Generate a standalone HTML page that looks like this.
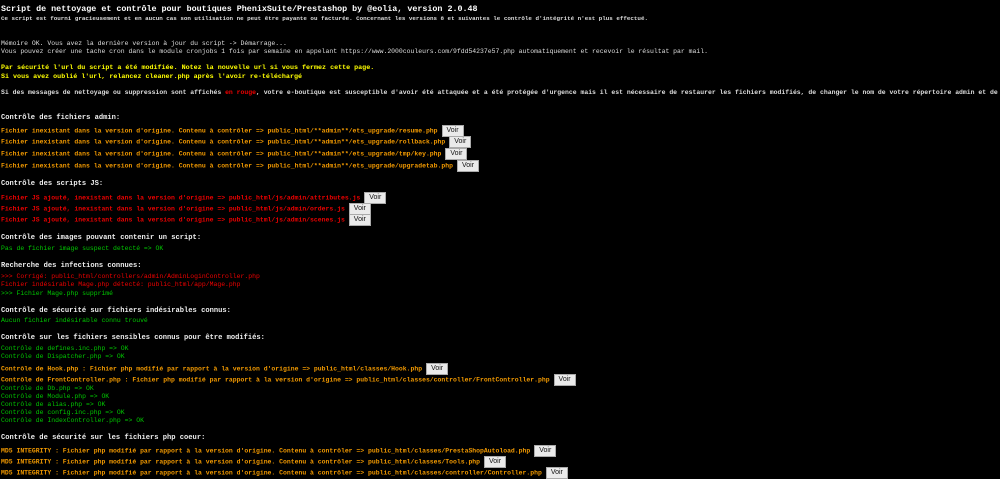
<!DOCTYPE html>
<html><head><meta charset="utf-8"><style>
body{margin:0;background:#000;width:1000px;height:477px;overflow:hidden;position:relative;font-family:"Liberation Mono",monospace;}
.l{position:absolute;left:1px;white-space:pre;line-height:10px;font-size:6.45px;font-weight:bold;}
.t{font-size:8.37px;color:#fff;}
.s{font-size:5.87px;color:#ddd;}
.w{color:#ddd;font-weight:normal}
.h{font-size:7.1px;color:#eee}
.y{color:#ff0;font-size:6.7px}
.o{color:#f39a00}
.r{color:#e00}
.g{color:#00c800;font-weight:normal}
.b{display:inline-block;width:20px;height:10px;line-height:10px;margin-left:4px;background:#eaeaea;border:1px solid #aaa;color:#111;font-family:"Liberation Sans",sans-serif;font-size:7px;font-weight:normal;text-align:center;vertical-align:middle;}
</style></head><body>
<div class="l t" style="top:4px">Script de nettoyage et contrôle pour boutiques PhenixSuite/Prestashop by @eolia, version 2.0.48</div>
<div class="l s" style="top:14px">Ce script est fourni gracieusement et en aucun cas son utilisation ne peut être payante ou facturée. Concernant les versions 8 et suivantes le contrôle d'intégrité n'est plus effectué.</div>
<div class="l w" style="top:39px;font-size:6.45px">Mémoire OK. Vous avez la dernière version à jour du script -> Démarrage...</div>
<div class="l w" style="top:47px;font-size:6.45px">Vous pouvez créer une tache cron dans le module cronjobs 1 fois par semaine en appelant https://www.2000couleurs.com/9fdd54237e57.php automatiquement et recevoir le résultat par mail.</div>
<div class="l y" style="top:63px">Par sécurité l'url du script a été modifiée. Notez la nouvelle url si vous fermez cette page.</div>
<div class="l y" style="top:72px">Si vous avez oublié l'url, relancez cleaner.php après l'avoir re-téléchargé</div>
<div class="l s" style="top:88px;font-size:6.45px">Si des messages de nettoyage ou suppression sont affichés <span class="r">en rouge</span>, votre e-boutique est susceptible d'avoir été attaquée et a été protégée d'urgence mais il est nécessaire de restaurer les fichiers modifiés, de changer le nom de votre répertoire admin et de</div>
<div class="l h" style="top:113px">Contrôle des fichiers admin:</div>
<div class="l o" style="top:125px">Fichier inexistant dans la version d'origine. Contenu à contrôler => public_html/**admin**/ets_upgrade/resume.php<span class="b">Voir</span></div>
<div class="l o" style="top:136px">Fichier inexistant dans la version d'origine. Contenu à contrôler => public_html/**admin**/ets_upgrade/rollback.php<span class="b">Voir</span></div>
<div class="l o" style="top:148px">Fichier inexistant dans la version d'origine. Contenu à contrôler => public_html/**admin**/ets_upgrade/tmp/key.php<span class="b">Voir</span></div>
<div class="l o" style="top:160px">Fichier inexistant dans la version d'origine. Contenu à contrôler => public_html/**admin**/ets_upgrade/upgradetab.php<span class="b">Voir</span></div>
<div class="l h" style="top:179px">Contrôle des scripts JS:</div>
<div class="l r" style="top:192px">Fichier JS ajouté, inexistant dans la version d'origine => public_html/js/admin/attributes.js<span class="b">Voir</span></div>
<div class="l r" style="top:203px">Fichier JS ajouté, inexistant dans la version d'origine => public_html/js/admin/orders.js<span class="b">Voir</span></div>
<div class="l r" style="top:214px">Fichier JS ajouté, inexistant dans la version d'origine => public_html/js/admin/scenes.js<span class="b">Voir</span></div>
<div class="l h" style="top:233px">Contrôle des images pouvant contenir un script:</div>
<div class="l g" style="top:244px">Pas de fichier image suspect detecté => OK</div>
<div class="l h" style="top:261px">Recherche des infections connues:</div>
<div class="l r" style="top:272px;font-weight:normal">>>> Corrigé: public_html/controllers/admin/AdminLoginController.php</div>
<div class="l r" style="top:280px;font-weight:normal">Fichier indésirable Mage.php détecté: public_html/app/Mage.php</div>
<div class="l g" style="top:289px">>>> Fichier Mage.php supprimé</div>
<div class="l h" style="top:306px">Contrôle de sécurité sur fichiers indésirables connus:</div>
<div class="l g" style="top:316px">Aucun fichier indésirable connu trouvé</div>
<div class="l h" style="top:333px">Contrôle sur les fichiers sensibles connus pour être modifiés:</div>
<div class="l g" style="top:344px">Contrôle de defines.inc.php => OK</div>
<div class="l g" style="top:352px">Contrôle de Dispatcher.php => OK</div>
<div class="l o" style="top:363px">Contrôle de Hook.php : Fichier php modifié par rapport à la version d'origine => public_html/classes/Hook.php<span class="b">Voir</span></div>
<div class="l o" style="top:374px">Contrôle de FrontController.php : Fichier php modifié par rapport à la version d'origine => public_html/classes/controller/FrontController.php<span class="b">Voir</span></div>
<div class="l g" style="top:384px">Contrôle de Db.php => OK</div>
<div class="l g" style="top:392px">Contrôle de Module.php => OK</div>
<div class="l g" style="top:400px">Contrôle de alias.php => OK</div>
<div class="l g" style="top:408px">Contrôle de config.inc.php => OK</div>
<div class="l g" style="top:416px">Contrôle de IndexController.php => OK</div>
<div class="l h" style="top:433px">Contrôle de sécurité sur les fichiers php coeur:</div>
<div class="l o" style="top:445px">MD5 INTEGRITY : Fichier php modifié par rapport à la version d'origine. Contenu à contrôler => public_html/classes/PrestaShopAutoload.php<span class="b">Voir</span></div>
<div class="l o" style="top:456px">MD5 INTEGRITY : Fichier php modifié par rapport à la version d'origine. Contenu à contrôler => public_html/classes/Tools.php<span class="b">Voir</span></div>
<div class="l o" style="top:467px">MD5 INTEGRITY : Fichier php modifié par rapport à la version d'origine. Contenu à contrôler => public_html/classes/controller/Controller.php<span class="b">Voir</span></div>
</body></html>
